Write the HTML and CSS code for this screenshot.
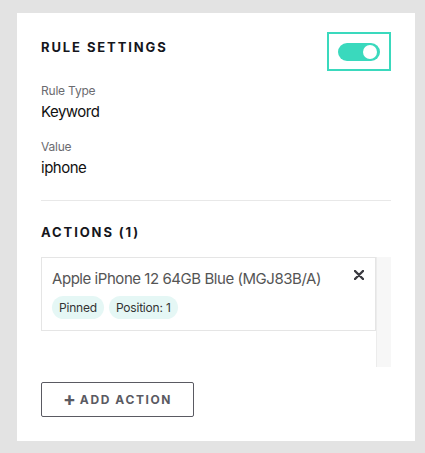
FILE: index.html
```html
<!DOCTYPE html>
<html lang="en">
<head>
  <meta charset="UTF-8">
  <title>Rule Settings</title>
  <meta name="viewport" content="width=device-width, initial-scale=1.0">
  <link rel="stylesheet" href="styles.css">
</head>
<body>
  <div class="card">
    <div class="header">
      <h2>Rule Settings</h2>
      <div class="toggle-box">
        <div class="toggle"><span class="knob"></span></div>
      </div>
    </div>

    <div class="field">
      <div class="label">Rule Type</div>
      <div class="value">Keyword</div>
    </div>
    <div class="field">
      <div class="label">Value</div>
      <div class="value">iphone</div>
    </div>

    <hr class="divider">

    <h2 class="actions-title">Actions (1)</h2>

    <div class="actions-list">
      <div class="actions-items">
        <div class="action">
          <div class="action-top">
            <span class="action-name">Apple iPhone 12 64GB Blue (MGJ83B/A)</span>
            <svg class="close" width="10" height="10" viewBox="0 0 10 10">
              <path d="M1 1 L9 9 M9 1 L1 9" stroke="#3a3a40" stroke-width="2.4" stroke-linecap="round"/>
            </svg>
          </div>
          <div class="chips">
            <span class="chip">Pinned</span>
            <span class="chip">Position: 1</span>
          </div>
        </div>
      </div>
      <div class="scrollbar"></div>
    </div>

    <button class="add-btn"><span class="plus">+</span>Add Action</button>
  </div>
</body>
</html>
```

FILE: styles.css
```css
body {
  margin: 0;
  padding: 13px 10px 12px 17px;
  background: #e3e3e3;
  font-family: Inter, "Liberation Sans", sans-serif;
}

.card {
  background: #fff;
  height: 428px;
  box-sizing: border-box;
  padding: 19px 24px 0 24px;
}

.header {
  display: flex;
  justify-content: space-between;
  align-items: flex-start;
}

h2 {
  margin: 0;
  font-size: 13px;
  font-weight: 700;
  letter-spacing: 1.9px;
  text-transform: uppercase;
  color: #15161c;
}

.header h2 {
  margin-top: 7px;
}

.toggle-box {
  width: 60px;
  height: 35px;
  border: 2px solid #3ad9bd;
  display: flex;
  align-items: center;
  justify-content: center;
}

.toggle {
  width: 42px;
  height: 18px;
  border-radius: 9px;
  background: #3ad9bd;
  position: relative;
}

.knob {
  position: absolute;
  right: 3px;
  top: 2px;
  width: 14px;
  height: 14px;
  border-radius: 50%;
  background: #fff;
}

.field {
  margin-top: 12px;
}

.field + .field {
  margin-top: 17px;
}

.label {
  font-size: 12px;
  color: #6b6b70;
  line-height: 16px;
  letter-spacing: -0.2px;
}

.value {
  font-size: 15px;
  color: #111;
  line-height: 20px;
  margin-top: 3px;
  letter-spacing: -0.5px;
}

.divider {
  border: 0;
  border-top: 1px solid #e8e8e8;
  margin: 22px 0 0 0;
}

.actions-title {
  margin-top: 23px;
}

.actions-list {
  display: flex;
  height: 110px;
  margin-top: 17px;
}

.actions-items {
  flex: 1;
}

.scrollbar {
  width: 14px;
  background: #f7f7f7;
  border-left: 1px solid #ececec;
}

.action {
  border: 1px solid #e5e5e5;
  padding: 10px 10px 11px 10px;
}

.action-top {
  display: flex;
  justify-content: space-between;
  align-items: flex-start;
}

.action-name {
  font-size: 15px;
  color: #555;
  line-height: 22px;
  letter-spacing: -0.45px;
}

.close {
  margin-top: 2px;
  margin-right: 1px;
}

.chips {
  display: flex;
  gap: 5px;
  margin-top: 6px;
}

.chip {
  background: #e5f7f5;
  border-radius: 12px;
  font-size: 12px;
  color: #333;
  line-height: 23px;
  padding: 0 7px;
  letter-spacing: -0.2px;
}

.add-btn {
  margin-top: 15px;
  width: 153px;
  height: 35px;
  background: #fff;
  border: 1px solid #5a5a62;
  border-radius: 2px;
  font-family: Inter, "Liberation Sans", sans-serif;
  font-size: 12px;
  font-weight: 700;
  letter-spacing: 1.6px;
  text-transform: uppercase;
  color: #5a5a62;
  display: flex;
  align-items: center;
  justify-content: center;
  padding: 0;
}

.plus {
  font-size: 19px;
  font-weight: 700;
  margin-right: 4px;
  letter-spacing: 0;
  line-height: 1;
}
```
